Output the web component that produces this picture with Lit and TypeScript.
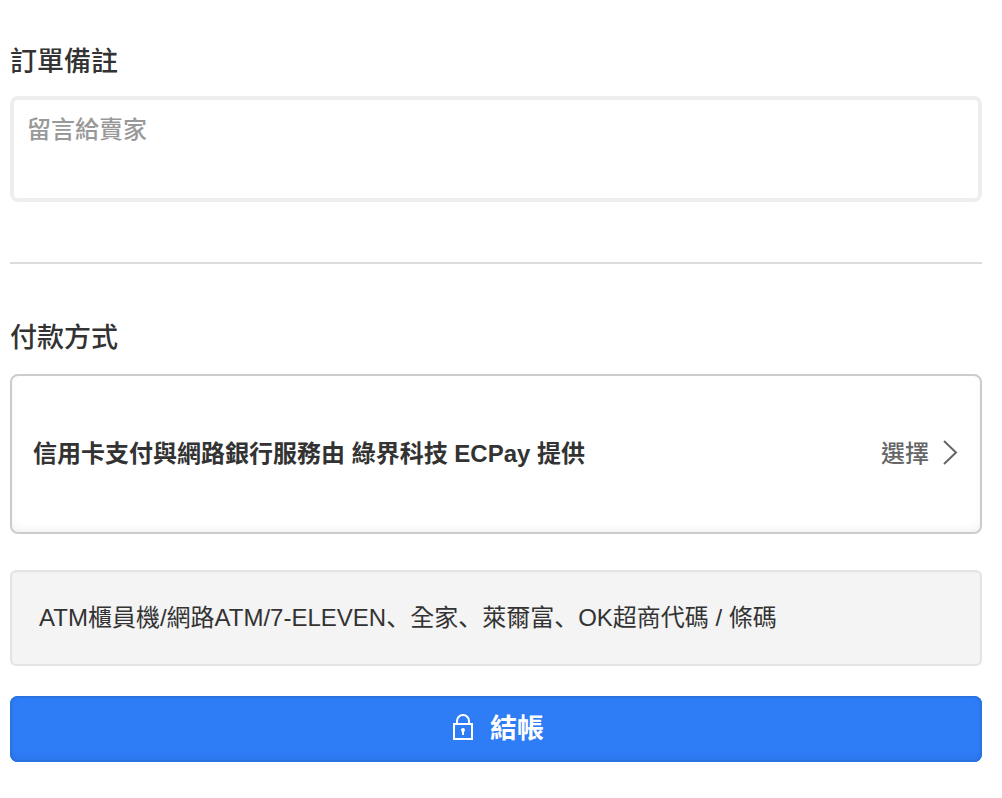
import { LitElement, html, css } from "lit";
import { customElement } from "lit/decorators.js";

@customElement("app-root")
export class AppRoot extends LitElement {
  static styles = css`
    :host {
      display: block;
      padding: 42px 20px 36px 10px;
      background: #fff;
      color: #333;
      font-family: "Liberation Sans", "Noto Sans CJK TC", sans-serif;
      font-size: 24px;
      line-height: 36px;
    }
    * {
      box-sizing: border-box;
    }
    .heading {
      display: block;
      margin: 0 0 14px;
      font-size: 27px;
      line-height: 40px;
      font-weight: 500;
    }
    .note {
      display: block;
      width: 100%;
      height: 106px;
      padding: 12px 13px;
      border: 4px solid #eee;
      border-radius: 8px;
      background: #fff;
      color: inherit;
      font: inherit;
      font-weight: 500;
      resize: none;
    }
    .note::placeholder {
      color: #999;
    }
    .rule {
      margin: 60px 0 54px;
      border: 0;
      border-top: 2px solid #ddd;
    }
    .method {
      display: flex;
      align-items: center;
      justify-content: space-between;
      width: 100%;
      margin-top: 16px;
      padding: 60px 21px;
      border: 2px solid #ccc;
      border-radius: 8px;
      background: #fff;
      box-shadow: inset 0 -4px 8px -2px #f0f0f0;
      color: inherit;
      font: inherit;
      text-align: left;
    }
    .name {
      font-weight: 700;
    }
    .choose {
      display: flex;
      align-items: center;
      gap: 14px;
      color: #666;
      font-weight: 500;
    }
    .info {
      margin: 36px 0 30px;
      padding: 28px 27px;
      border: 2px solid #e3e3e3;
      border-radius: 6px;
      background: #f4f4f4;
      box-shadow: inset 0 2px 2px #f0f0f0;
    }
    .comma {
      font-family: "Noto Sans CJK JP", sans-serif;
      line-height: 1;
    }
    .pay {
      display: flex;
      align-items: center;
      justify-content: center;
      gap: 16px;
      width: 100%;
      padding: 13px;
      border: 0;
      border-radius: 8px;
      background: #2e7cf6;
      box-shadow: inset 0 0 0 2px #2a72e2, inset 0 -4px 8px -2px #2a72e2;
      color: #fff;
      font: inherit;
      font-size: 27px;
      line-height: 40px;
      font-weight: 700;
    }
    .lock {
      overflow: visible;
    }
  `;

  render() {
    const comma = html`<span class="comma" lang="ja">、</span>`;
    return html`
      <main>
        <label class="heading" for="note">訂單備註</label>
        <textarea class="note" id="note" placeholder="留言給賣家"></textarea>
        <hr class="rule" />
        <h2 class="heading">付款方式</h2>
        <button class="method" type="button">
          <span class="name">信用卡支付與網路銀行服務由 綠界科技 ECPay 提供</span>
          <span class="choose">選擇
            <svg width="16" height="28" viewBox="0 0 16 28" fill="none" stroke="#666" stroke-width="2" aria-hidden="true">
              <path d="M1 1l12 11.500L1 24" />
            </svg>
          </span>
        </button>
        <div class="info">ATM櫃員機/網路ATM/7-ELEVEN${comma}全家${comma}萊爾富${comma}OK超商代碼 / 條碼</div>
        <button class="pay" type="button">
          <svg class="lock" width="26" height="28" viewBox="0 0 26 28" fill="none" stroke="#fff" stroke-width="2" aria-hidden="true">
            <path d="M6 9h18v15H6z" />
            <path d="M9 9V6a6 6 0 0 1 12 0v3" />
            <path d="M15 15v5" />
            <circle cx="15" cy="15" r="2" fill="#fff" stroke="none" />
          </svg>
          結帳
        </button>
      </main>
    `;
  }
}
